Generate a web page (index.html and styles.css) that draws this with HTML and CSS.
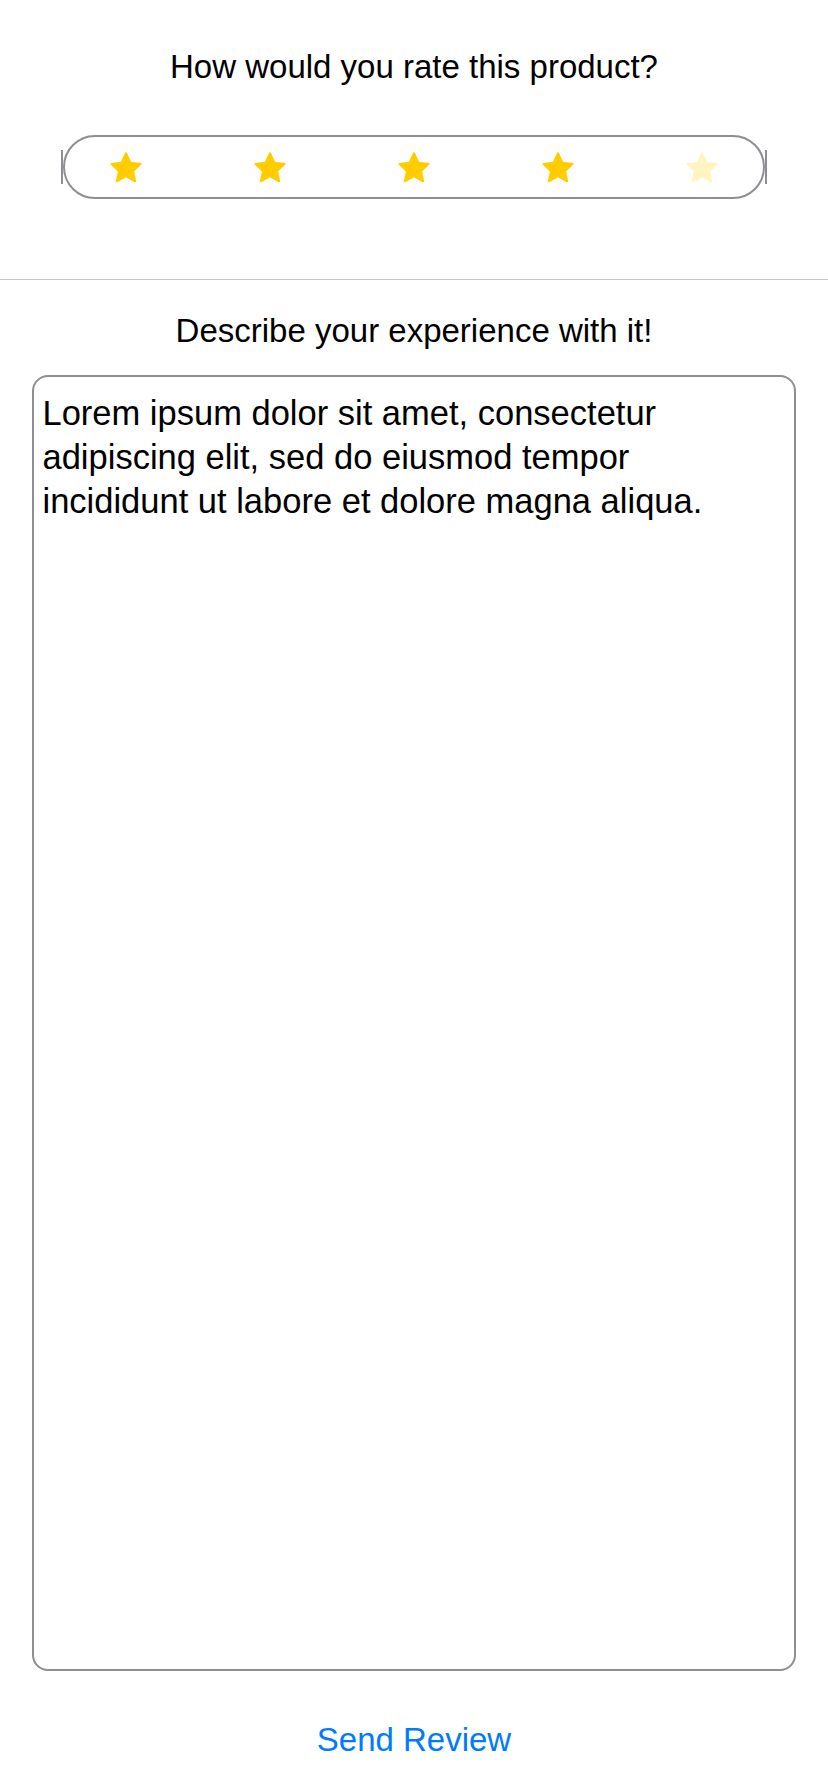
FILE: index.html
```html
<!DOCTYPE html>
<html>
<head>
<meta charset="utf-8">
<link rel="stylesheet" href="styles.css">
</head>
<body>
<main class="screen">
  <section class="rating">
    <h1 class="prompt">How would you rate this product?</h1>
    <div class="stars">
      <svg class="star" viewBox="0 0 24 24"><path d="M12 2.6l2.8 6 6.5.8-4.8 4.5 1.3 6.5L12 17.1l-5.8 3.3 1.3-6.5-4.8-4.5 6.5-.8z"/></svg>
      <svg class="star" viewBox="0 0 24 24"><path d="M12 2.6l2.8 6 6.5.8-4.8 4.5 1.3 6.5L12 17.1l-5.8 3.3 1.3-6.5-4.8-4.5 6.5-.8z"/></svg>
      <svg class="star" viewBox="0 0 24 24"><path d="M12 2.6l2.8 6 6.5.8-4.8 4.5 1.3 6.5L12 17.1l-5.8 3.3 1.3-6.5-4.8-4.5 6.5-.8z"/></svg>
      <svg class="star" viewBox="0 0 24 24"><path d="M12 2.6l2.8 6 6.5.8-4.8 4.5 1.3 6.5L12 17.1l-5.8 3.3 1.3-6.5-4.8-4.5 6.5-.8z"/></svg>
      <svg class="star star-off" viewBox="0 0 24 24"><path d="M12 2.6l2.8 6 6.5.8-4.8 4.5 1.3 6.5L12 17.1l-5.8 3.3 1.3-6.5-4.8-4.5 6.5-.8z"/></svg>
    </div>
  </section>
  <hr class="divider">
  <section class="review">
    <h2 class="prompt">Describe your experience with it!</h2>
    <div class="textbox">Lorem ipsum dolor sit amet, consectetur adipiscing elit, sed do eiusmod tempor incididunt ut labore et dolore magna aliqua.</div>
    <button class="send">Send Review</button>
  </section>
</main>
</body>
</html>
```

FILE: styles.css
```css
html, body {
  margin: 0;
  padding: 0;
  background: #ffffff;
}

body {
  font-family: "Liberation Sans", Arial, sans-serif;
  color: #000000;
  width: 828px;
  height: 1792px;
  overflow: hidden;
}

.screen {
  display: flex;
  flex-direction: column;
}

.rating {
  display: flex;
  flex-direction: column;
  align-items: center;
  padding-top: 47px;
}

.prompt {
  margin: 0;
  font-size: 33px;
  line-height: 40px;
  font-weight: 400;
  text-align: center;
}

.stars {
  position: relative;
  box-sizing: border-box;
  width: 702px;
  height: 64px;
  margin-top: 48px;
  border: 2px solid #8e8e93;
  border-radius: 32px;
  display: flex;
  align-items: center;
  justify-content: space-between;
  padding: 0 42px;
}

.stars::before,
.stars::after {
  content: "";
  position: absolute;
  top: 13px;
  width: 2px;
  height: 34px;
  background: #8e8e93;
}

.stars::before {
  left: -4px;
}

.stars::after {
  right: -4px;
}

.star {
  width: 38px;
  height: 38px;
  margin-top: 2px;
  fill: #ffcc00;
  stroke: #ffcc00;
  stroke-width: 1.2;
  stroke-linejoin: round;
}

.star-off {
  fill: #fff4c2;
  stroke: #fff4c2;
}

.divider {
  margin: 80px 0 0;
  border: 0;
  height: 1px;
  background: #c8c8cc;
}

.review {
  display: flex;
  flex-direction: column;
  align-items: center;
  padding-top: 31px;
}

.textbox {
  box-sizing: border-box;
  width: 764px;
  height: 1296px;
  margin-top: 24px;
  border: 2px solid #8e8e93;
  border-radius: 16px;
  padding: 13.5px 36px 13.5px 8.5px;
  font-size: 34.5px;
  line-height: 44px;
  text-align: left;
}

.send {
  margin-top: 47px;
  border: 0;
  background: none;
  padding: 0;
  font-family: "Liberation Sans", Arial, sans-serif;
  font-size: 33px;
  line-height: 44px;
  color: #007aff;
}
```
